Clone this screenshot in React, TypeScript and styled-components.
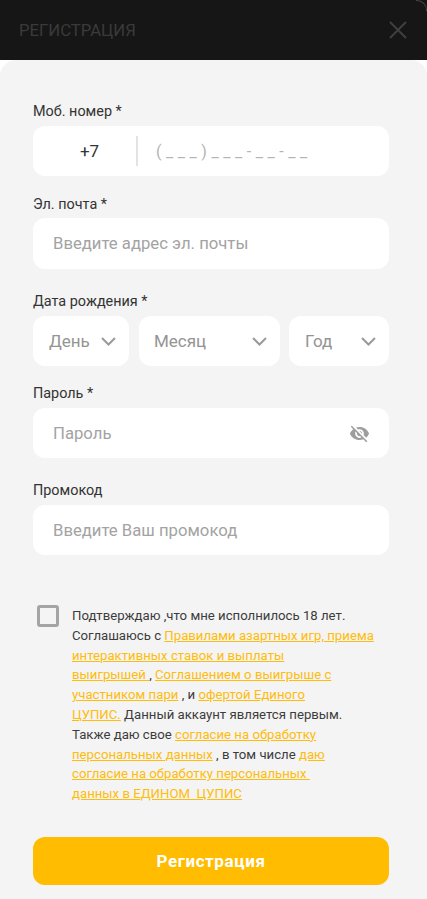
import styled, { createGlobalStyle } from 'styled-components';
import { MdVisibilityOff } from 'react-icons/md';

const Global = createGlobalStyle`
  * {
    box-sizing: border-box;
  }
  html,
  body {
    margin: 0;
    padding: 0;
    background: #ffffff;
    font-family: Roboto, 'Liberation Sans', sans-serif;
  }
`;
const Root = styled.div`
  width: 427px;
  height: 899px;
  overflow: hidden;
  background: #ffffff;
`;
const Header = styled.header`
  position: relative;
  height: 60px;
  padding: 0 19px;
  background: #161616;
  display: flex;
  align-items: center;
  justify-content: space-between;
  &::after {
    content: '';
    position: absolute;
    top: 0;
    right: 0;
    width: 10px;
    height: 10px;
    border-top: 1px solid #444444;
    border-right: 1px solid #444444;
    border-top-right-radius: 10px;
  }
`;
const Title = styled.h1`
  margin: 0;
  font-size: 16.7px;
  font-weight: 400;
  color: #3a3a3a;
`;
const CloseIcon = styled.svg`
  width: 18px;
  height: 18px;
  margin-right: 1px;
  stroke: #3f3f3f;
  stroke-width: 2;
  fill: none;
`;
const Sheet = styled.main`
  height: 839px;
  padding: 41px 38px 0 33px;
  background: #f4f4f4;
  border-radius: 16px 16px 0 0;
`;
const Field = styled.div<{ $gap: number }>`
  margin-bottom: ${(p) => p.$gap}px;
`;
const Label = styled.label<{ $height?: number }>`
  display: block;
  height: ${(p) => p.$height ?? 25}px;
  font-size: 14.4px;
  line-height: 21px;
  color: #333333;
`;
const Box = styled.div<{ $height?: number }>`
  height: ${(p) => p.$height ?? 50}px;
  background: #ffffff;
  border-radius: 12px;
  display: flex;
  align-items: center;
  font-size: 16.7px;
  color: #a3a3a3;
`;
const Prefix = styled.span`
  width: 103px;
  padding-left: 10px;
  text-align: center;
  font-size: 17px;
  color: #333333;
`;
const Divider = styled.span`
  width: 2px;
  height: 30px;
  background: #e3e3e3;
`;
const Mask = styled.span`
  margin-left: 18px;
  font-size: 16px;
  letter-spacing: 4.55px;
  color: #b4b4b4;
`;
const Placeholder = styled.span`
  padding-left: 20px;
  flex: 1;
`;
const DateRow = styled.div`
  display: flex;
  gap: 9px;
  & > :first-child {
    margin-right: 1px;
  }
`;
const DateBox = styled(Box)<{ $width: number; $pad: number }>`
  width: ${(p) => p.$width}px;
  padding: 0 13px 0 ${(p) => p.$pad}px;
  justify-content: space-between;
  font-size: 17px;
  color: #949494;
`;
const Chevron = styled.svg`
  width: 15px;
  height: 9px;
  stroke: #9a9a9a;
  stroke-width: 2;
  fill: none;
`;
const EyeIcon = styled(MdVisibilityOff)`
  width: 21px;
  height: 21px;
  margin-right: 19px;
  color: #9e9e9e;
`;
const Consent = styled.div`
  margin-top: 49px;
  padding-left: 4px;
  display: flex;
  gap: 13px;
`;
const Check = styled.span`
  flex: none;
  width: 22px;
  height: 22px;
  margin-top: 1px;
  border: 3px solid #a4a4a4;
  border-radius: 3px;
`;
const Legal = styled.p`
  margin: 2px 0 0;
  width: 312px;
  font-size: 13.2px;
  line-height: 19.8px;
  color: #3c3c3c;
`;
const Anchor = styled.a`
  color: #ffbc0a;
  text-decoration: underline;
  white-space: pre-wrap;
`;
const Submit = styled.button`
  display: block;
  width: 356px;
  height: 48px;
  margin-top: 33px;
  border: none;
  border-radius: 12px;
  background: #ffbc00;
  color: #ffffff;
  font-family: inherit;
  font-size: 17px;
  font-weight: 700;
  letter-spacing: 0.6px;
`;

const DownArrow = () => (
  <Chevron viewBox="0 0 15 9">
    <path d="M1 1l6.5 6.5L14 1" />
  </Chevron>
);

export default function App() {
  return (
    <Root>
      <Global />
      <Header>
        <Title>РЕГИСТРАЦИЯ</Title>
        <CloseIcon viewBox="0 0 18 18">
          <path d="M1 1l16 16M17 1L1 17" />
        </CloseIcon>
      </Header>
      <Sheet>
        <Field $gap={18}>
          <Label>Моб. номер *</Label>
          <Box>
            <Prefix>+7</Prefix>
            <Divider />
            <Mask>(___)___-__-__</Mask>
          </Box>
        </Field>
        <Field $gap={22}>
          <Label $height={24}>Эл. почта *</Label>
          <Box $height={51}>
            <Placeholder>Введите адрес эл. почты</Placeholder>
          </Box>
        </Field>
        <Field $gap={17}>
          <Label>Дата рождения *</Label>
          <DateRow>
            <DateBox $width={96} $pad={16}>
              День <DownArrow />
            </DateBox>
            <DateBox $width={141} $pad={15}>
              Месяц <DownArrow />
            </DateBox>
            <DateBox $width={100} $pad={16}>
              Год <DownArrow />
            </DateBox>
          </DateRow>
        </Field>
        <Field $gap={22}>
          <Label>Пароль *</Label>
          <Box>
            <Placeholder>Пароль</Placeholder>
            <EyeIcon />
          </Box>
        </Field>
        <Field $gap={0}>
          <Label>Промокод</Label>
          <Box>
            <Placeholder>Введите Ваш промокод</Placeholder>
          </Box>
        </Field>
        <Consent>
          <Check />
          <Legal>
            Подтверждаю ,что мне исполнилось 18 лет.
            <br />
            Соглашаюсь с <Anchor>Правилами азартных игр, приема</Anchor>
            <br />
            <Anchor>интерактивных ставок и выплаты</Anchor>
            <br />
            <Anchor>выигрышей </Anchor>, <Anchor>Соглашением о выигрыше с</Anchor>
            <br />
            <Anchor>участником пари</Anchor> , и <Anchor>офертой Единого</Anchor>
            <br />
            <Anchor>ЦУПИС.</Anchor> Данный аккаунт является первым.
            <br />
            Также даю свое <Anchor>согласие на обработку</Anchor>
            <br />
            <Anchor>персональных данных</Anchor> , в том числе <Anchor>даю</Anchor>
            <br />
            <Anchor>согласие на обработку персональных </Anchor>
            <br />
            <Anchor>данных в ЕДИНОМ  ЦУПИС</Anchor>
          </Legal>
        </Consent>
        <Submit>Регистрация</Submit>
      </Sheet>
    </Root>
  );
}
